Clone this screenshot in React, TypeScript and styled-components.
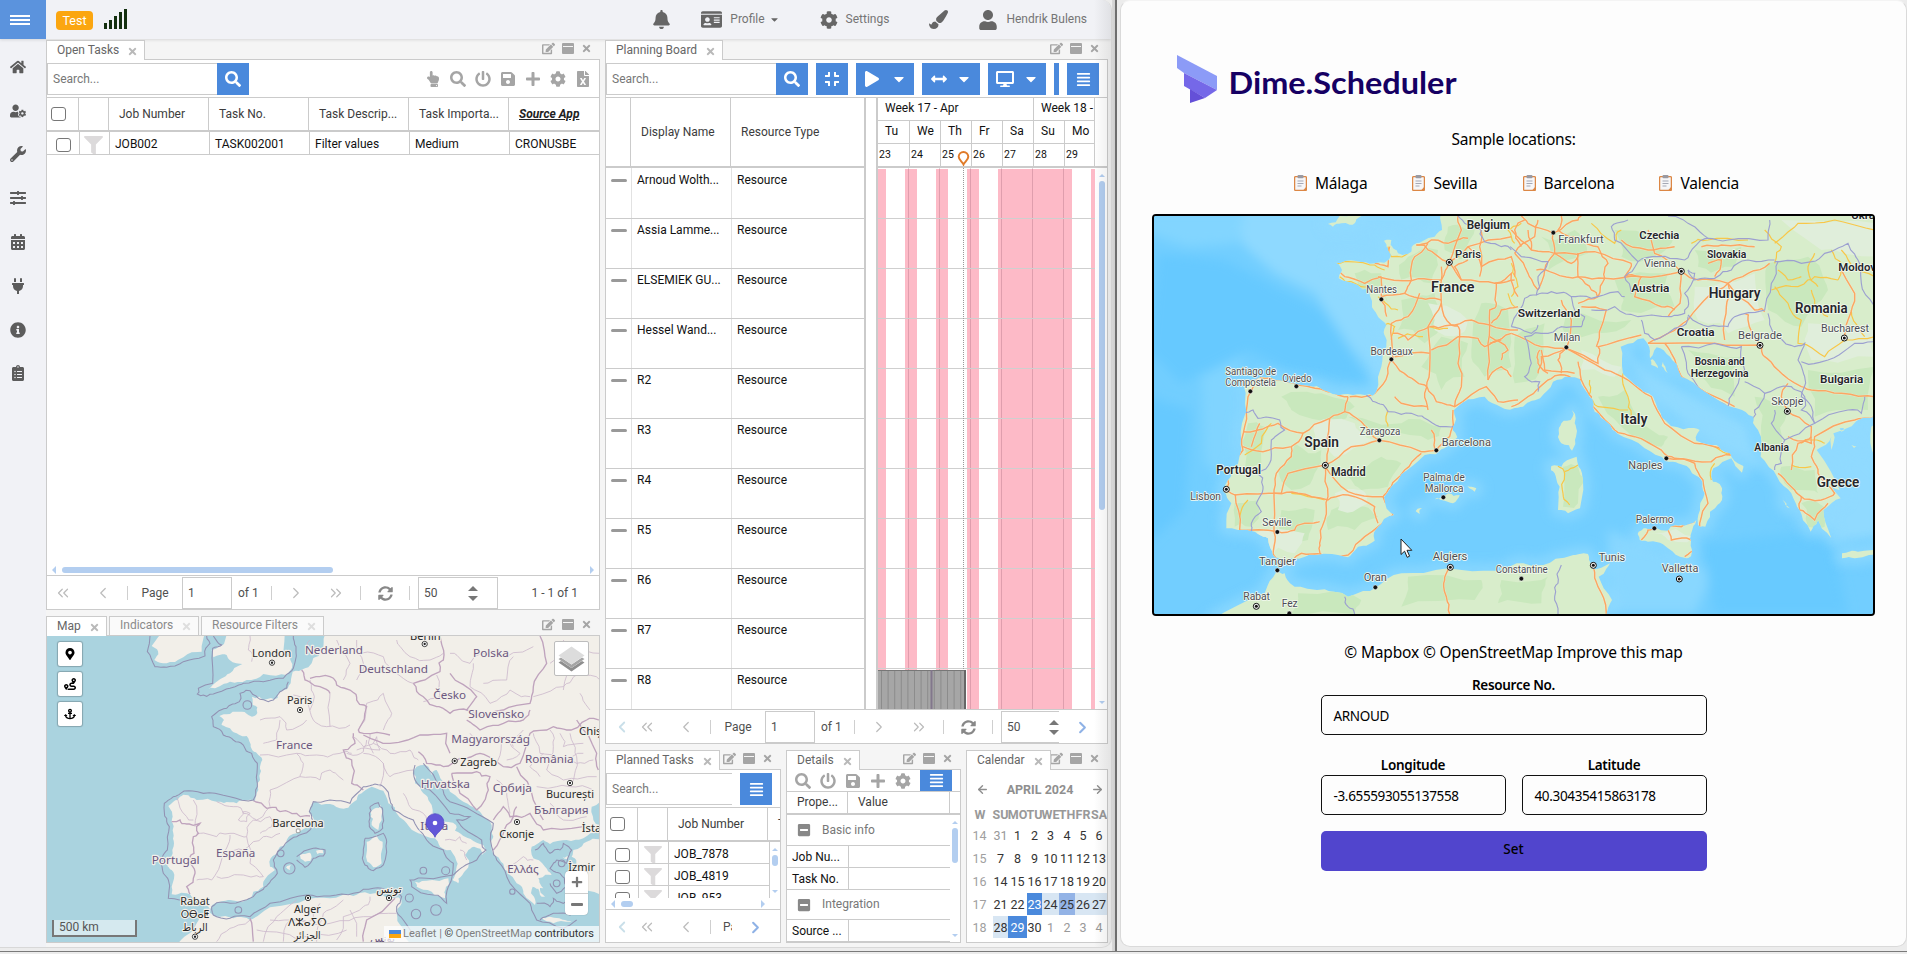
import React from "react";
import styled, { createGlobalStyle } from "styled-components";
import {
  FaHome, FaUserCog, FaWrench, FaSlidersH, FaCalendarAlt, FaPlug, FaInfoCircle, FaClipboardList,
  FaBell, FaIdCard, FaCog, FaPaintBrush, FaUser, FaSearch, FaPowerOff, FaSave, FaPlus, FaFileExcel,
  FaHandPointUp, FaEdit, FaTimes, FaCompress, FaPlay, FaCaretDown, FaArrowsAltH, FaDesktop,
  FaAlignJustify, FaSyncAlt, FaFilter, FaMinusSquare, FaMapMarkerAlt, FaRoute, FaAnchor,
} from "react-icons/fa";
import { ChevronLeft, ChevronRight, ChevronsLeft, ChevronsRight, ArrowLeft, ArrowRight } from "lucide-react";

const line = "#cbcbcb";
const blue = "#4a89dc";
const grey = "#a5a5a5";
const pale = "#b3cef0";

const GlobalStyle = createGlobalStyle`
  *, *::before, *::after { box-sizing: border-box; }
  html, body { margin: 0; height: 100%; overflow: hidden; background: #f0f0f0; }
  body { font: 12px/1.2 Roboto, "Liberation Sans", sans-serif; color: #3c3c3c; }
  svg { flex: none; }
`;

/* ---------- windows ---------- */
const Screen = styled.div`
  width: 1907px; height: 954px; display: flex; flex-direction: column; overflow: hidden;
  background: #ececec;
`;
const Windows = styled.div`
  display: flex; height: 952px; border-bottom: 1px solid #7a7a7a;
`;
const SchedulerWindow = styled.div`
  width: 1112px; height: 948px; display: flex; flex-direction: column; position: relative;
  background: #f5f5f5; border-right: 1px solid #d4d4d4; border-bottom: 1px solid #d8d8d8;
  border-radius: 0 10px 10px 0; overflow: hidden;
  &::after {
    content: ""; position: absolute; top: 0; right: 0; bottom: 0; width: 17px; pointer-events: none;
    background: linear-gradient(to right, rgba(0,0,0,0), rgba(0,0,0,.07)); z-index: 2;
  }
`;
const Divider = styled.div`
  width: 5px; margin-right: 3px; background: linear-gradient(to right, #d8d8d8, #cfcfcf);
  border-right: 2px solid #6e6e6e;
`;
const FormWindow = styled.div`
  flex: 1; height: 947px; background: #fdfdfd; border: 1px solid #dadada; border-top-color: #f4f4f4;
  border-radius: 10px; position: relative; display: flex; flex-direction: column; align-items: center;
  font-family: "Noto Sans", "Open Sans", sans-serif; color: #000;
`;

/* ---------- top bar and sidebar ---------- */
const TopBar = styled.div`
  height: 39px; flex: none; display: flex; align-items: center; background: #f1f2f6;
  box-shadow: 0 1px 3px rgba(0,0,0,.12); color: #666; padding-right: 20px; z-index: 1;
`;
const MenuButton = styled.div`
  width: 46px; height: 39px; background: #5b93dd; color: #fff; display: flex; align-items: center;
  padding-left: 10px;
`;
const MenuLines = styled.div`
  width: 20px; height: 10px; border-top: 2px solid #fff; border-bottom: 2px solid #fff; position: relative;
  &::after { content: ""; position: absolute; left: 0; right: 0; top: 2px; height: 2px; background: #fff; }
`;
const TestBadge = styled.div`
  margin-left: 10px; width: 37px; height: 19px; border-radius: 4px; background: #fba610; color: #fff;
  display: flex; align-items: center; justify-content: center; font-size: 12.5px; margin-top: 2px;
`;
const Signal = styled.div`
  display: flex; align-items: flex-end; gap: 2px; margin: -1px auto 0 11px; height: 20px;
`;
const SignalBar = styled.i<{ $h: number }>`
  width: 3px; height: ${p => p.$h}px; background: #14300f;
`;
const NavItem = styled.div<{ $gap: number }>`
  display: flex; align-items: center; margin-left: ${p => p.$gap}px; font-size: 12px;
  svg { color: #666; }
`;
const NavText = styled.span`margin: -1px 4px 0 8px; color: #757575;`;
const Body = styled.div`display: flex; flex: 1; min-height: 0;`;
const Sidebar = styled.div`
  width: 46px; flex: none; background: #f1f2f6; display: flex; flex-direction: column; padding: 6px 10px 0 0;
  color: #5c5c5c;
`;
const SideItem = styled.div`
  height: 43.8px; display: flex; align-items: center; justify-content: center; flex: none;
`;
const Content = styled.div`display: flex; gap: 5px; padding-top: 1px;`;
const Column = styled.div<{ $w: number }>`
  width: ${p => p.$w}px; display: flex; flex-direction: column; gap: 6px;
`;
const BottomPanels = styled.div`display: flex; gap: 5px;`;

/* ---------- panels ---------- */
const PanelBox = styled.div<{ $w: number; $h: number }>`
  width: ${p => p.$w}px; height: ${p => p.$h}px; display: flex; flex-direction: column; flex: none;
`;
const TabRow = styled.div`
  height: 20px; flex: none; display: flex; gap: 2px;
`;
const Tab = styled.div<{ $w: number; $active?: boolean }>`
  width: ${p => p.$w}px; border: 1px solid ${line}; border-bottom: 0; display: flex; align-items: center;
  justify-content: space-between; padding: 0 6px 1px 10px; background: ${p => (p.$active ? "#fff" : "#fafafa")};
  color: ${p => (p.$active ? "#666" : "#8a8a8a")}; position: relative; z-index: ${p => (p.$active ? 1 : 0)};
  height: ${p => (p.$active ? 20 : 19)}px; white-space: nowrap; flex: none;
  svg { color: ${p => (p.$active ? "#b9b9b9" : "#dedede")}; margin-top: 2px; }
`;
const TabTools = styled.div<{ $tight?: boolean }>`
  margin-left: auto; display: flex; gap: 7px; align-items: center; color: ${grey}; padding-right: 8px;
  height: 17px; ${p => p.$tight && "margin-left: -3px;"}
`;
const WindowGlyph = styled.i`
  width: 12px; height: 11px; background: ${grey}; border-radius: 1px; position: relative;
  &::after { content: ""; position: absolute; left: 1px; right: 1px; top: 3px; height: 1px; background: #f5f5f5; }
`;
const PanelBody = styled.div`
  flex: 1; margin-top: -1px; border: 1px solid ${line}; background: #fff; display: flex; flex-direction: column;
  min-height: 0; position: relative; overflow: hidden;
`;
const Toolbar = styled.div`
  height: 38px; flex: none; padding-top: 3px; border-bottom: 1px solid ${line}; display: flex; align-items: flex-start;
`;
const SearchInput = styled.div<{ $w: number }>`
  width: ${p => p.$w}px; height: 32px; border: 1px solid ${line}; border-right: 0; padding-left: 5px;
  display: flex; align-items: center; color: #777;
`;
const BlueButton = styled.div<{ $w: number; $ml?: number; $h?: number; $gap?: number }>`
  width: ${p => p.$w}px; height: ${p => p.$h ?? 32}px; margin-left: ${p => p.$ml ?? 0}px; background: ${blue};
  color: #fff; display: flex; align-items: center; justify-content: center; gap: ${p => p.$gap ?? 11}px; flex: none;
`;
const IconRow = styled.div<{ $gap: number; $pad: number }>`
  margin-left: auto; height: 32px; display: flex; align-items: center; gap: ${p => p.$gap}px;
  padding-right: ${p => p.$pad}px; color: ${grey};
`;
const HeaderRow = styled.div<{ $h: number }>`
  display: flex; height: ${p => p.$h}px; border-bottom: 2px solid ${line}; flex: none; white-space: nowrap;
`;
const HeaderCell = styled.div<{ $w: number; $pad?: number; $strong?: boolean; $last?: boolean }>`
  width: ${p => p.$w}px; flex: none; border-right: ${p => (p.$last ? 0 : 1)}px solid ${line}; display: flex; align-items: center;
  padding-left: ${p => p.$pad ?? 10}px; overflow: hidden;
  ${p => p.$strong && "font-weight: 700; font-style: italic; text-decoration: underline; color: #222;"}
`;
const Row = styled.div<{ $h: number }>`
  display: flex; height: ${p => p.$h}px; border-bottom: 1px solid ${line}; flex: none; white-space: nowrap; color: #111;
`;
const Cell = styled.div<{ $w: number; $pad?: number; $tone?: string; $last?: boolean; $top?: number; $drop?: number }>`
  width: ${p => p.$w}px; flex: none; border-right: ${p => (p.$last ? 0 : 1)}px solid ${p => p.$tone ?? line};
  display: flex; align-items: ${p => (p.$top === undefined ? "center" : "flex-start")};
  padding-left: ${p => p.$pad ?? 5}px; padding-top: ${p => p.$top ?? p.$drop ?? 0}px; overflow: hidden;
`;
const Check = styled.i`
  width: 15px; height: 14px; border: 1px solid #777; border-radius: 3px; background: #fff; flex: none;
`;
const Spacer = styled.div`flex: 1;`;

const ScrollRow = styled.div<{ $pr: number }>`
  height: 11px; flex: none; display: flex; align-items: center; gap: 6px; padding: 0 ${p => p.$pr}px 0 5px;
`;
const Thumb = styled.i<{ $w: number; $h: number }>`
  width: ${p => p.$w}px; height: ${p => p.$h}px; border-radius: 3px; background: ${pale};
`;
const Arrow = styled.i<{ $dir: "l" | "r" | "u" | "d"; $c?: string; $s?: number }>`
  width: 0; height: 0; border: ${p => p.$s ?? 4}px solid transparent; flex: none;
  ${p => p.$dir === "l" && `border-right-color: ${p.$c ?? pale}; border-left: 0;`}
  ${p => p.$dir === "r" && `border-left-color: ${p.$c ?? pale}; border-right: 0; margin-left: auto;`}
  ${p => p.$dir === "u" && `border-bottom-color: ${p.$c ?? pale}; border-top: 0;`}
  ${p => p.$dir === "d" && `border-top-color: ${p.$c ?? pale}; border-bottom: 0; margin-top: auto;`}
`;
const VScroll = styled.div<{ $w: number }>`
  width: ${p => p.$w}px; flex: none; display: flex; flex-direction: column; align-items: center; gap: 4px;
  padding: 6px 0 5px; background: #fff; color: ${pale};
`;

const PagerBar = styled.div`
  height: 34px; flex: none; border-top: 1px solid ${line}; display: flex; align-items: center; color: #505050;
  overflow: hidden; padding-top: 1px;
`;
const PagerCell = styled.div<{ $w: number; $pl?: number; $pr?: number; $start?: boolean; $tone?: string }>`
  width: ${p => p.$w}px; padding-left: ${p => p.$pl ?? 0}px; padding-right: ${p => p.$pr ?? 0}px; flex: none;
  display: flex; align-items: center;
  justify-content: ${p => (p.$start ? "flex-start" : "center")}; color: ${p => p.$tone ?? "inherit"};
  overflow: hidden; white-space: nowrap;
`;
const PagerSep = styled.i`width: 1px; height: 14px; background: #cfcfcf; flex: none;`;
const PagerInput = styled.div<{ $w: number; $open?: boolean; $ml?: number }>`
  width: ${p => p.$w}px; height: 32px; border: 1px solid ${line}; ${p => p.$open && "border-right: 0;"}
  margin-left: ${p => p.$ml ?? 0}px; display: flex; align-items: center; justify-content: space-between;
  padding: 0 ${p => (p.$open ? 0 : 19)}px 0 5px; flex: none;
`;
const Spinner = styled.span`
  display: flex; flex-direction: column; height: 15px; justify-content: space-between;
`;
const PagerInfo = styled.div`margin-left: auto; padding-right: 21px;`;

function Spin() {
  return <Spinner><Arrow $dir="u" $s={5} $c="#777" /><Arrow $dir="d" $s={5} $c="#777" /></Spinner>;
}

/* ---------- planning board ---------- */
const Board = styled.div`display: flex; flex: 1; min-height: 0;`;
const ResourceSide = styled.div`
  width: 260px; border-right: 2px solid ${line}; display: flex; flex-direction: column; overflow: hidden; flex: none;
`;
const Splitter = styled.div`width: 10px; flex: none;`;
const TimeSide = styled.div`
  width: 231px; border-left: 2px solid ${line}; display: flex; flex-direction: column; overflow: hidden; flex: none;
`;
const TimeHead = styled.div`
  height: 70px; border-bottom: 2px solid ${line}; display: flex; flex-direction: column; flex: none; color: #111;
  position: relative; width: 229px;
`;
const TimeLine = styled.div<{ $h: number; $last?: boolean }>`
  display: flex; height: ${p => p.$h}px; border-bottom: ${p => (p.$last ? 0 : 1)}px solid ${line}; width: 217px; flex: none;
`;
const TimeCell = styled.div<{ $w: number; $pad: number; $small?: boolean }>`
  width: ${p => p.$w}px; flex: none; border-right: 1px solid ${line}; padding: 0 0 2px ${p => p.$pad}px;
  display: flex; align-items: center; overflow: hidden; white-space: nowrap;
  ${p => p.$small && "font-size: 10.5px; padding-bottom: 0;"}
`;
const NowPin = styled.svg`position: absolute; left: 79px; top: 53px;`;
const TimeBody = styled.div`display: flex; flex: 1; min-height: 0;`;
const Dash = styled.i`width: 16px; height: 3px; border-radius: 2px; background: #999; margin-top: 6px;`;

/* ---------- calendar ---------- */
const CalTitle = styled.div`
  display: flex; justify-content: space-between; align-items: center; padding: 0 3px 2px 9px; height: 40px;
  font-weight: 700; color: #8f8f8f; font-size: 12.5px; flex: none;
`;
const CalGrid = styled.div`
  display: grid; grid-template-columns: 26px 15px 19px 15px 17px 16px 16px 16px; grid-template-rows: 20px;
  grid-auto-rows: 23px; margin-top: -6px;
`;
const Day = styled.div<{ $k: string }>`
  display: flex; align-items: center; justify-content: center; font-size: 12.5px; color: #333;
  ${p => p.$k === "h" && "font-weight: 700; color: #999;"}
  ${p => p.$k === "w" && "color: #a0a0a0; padding-right: 1px;"}
  ${p => p.$k === "o" && "color: #999;"}
  ${p => p.$k === "s" && `background: ${blue}; color: #fff; height: 22px;`}
  ${p => p.$k === "r" && "background: #d8e6f3; height: 22px;"}
  ${p => p.$k === "t" && "background: #93b3e6; height: 22px;"}
`;

/* ---------- map overlays ---------- */
const MapFrame = styled.div`position: relative; flex: 1; overflow: hidden; background: #aad3df;`;
const MapSvg = styled.svg`display: block;`;
const MapButtons = styled.div`
  position: absolute; left: 11px; top: 6px; display: flex; flex-direction: column; gap: 6px;
`;
const MapButton = styled.div`
  width: 24px; height: 24px; background: #fff; border-radius: 2px; display: flex; align-items: center;
  justify-content: center; color: #000; box-shadow: 0 0 1px 1px rgba(0,0,0,.22);
`;
const LayersButton = styled.div`
  position: absolute; right: 10px; top: 5px; width: 35px; height: 35px; background: #fff; border: 1px solid #bdbdbd;
  border-radius: 2px; display: flex; align-items: center; justify-content: center;
`;
const ZoomControl = styled.div`
  position: absolute; right: 11px; top: 235px; width: 23px; height: 44px; background: #fff; border-radius: 4px;
  display: flex; flex-direction: column; box-shadow: 0 0 1px rgba(0,0,0,.4);
`;
const ZoomHalf = styled.div`
  flex: 1; display: flex; align-items: center; justify-content: center; position: relative;
  &:first-child { border-bottom: 1px solid #ccc; }
`;
const ScaleBar = styled.div`
  position: absolute; left: 5px; bottom: 5px; width: 85px; height: 17px; border: 2px solid #777; border-top: 0;
  background: rgba(255,255,255,.5); padding-left: 5px; color: #555; line-height: 14px;
`;
const Attribution = styled.div`
  position: absolute; right: 0; bottom: 0; height: 16px; display: flex; align-items: center; gap: 2.5px;
  background: rgba(255,255,255,.7); padding: 0 5px; color: #333; font-size: 11px; white-space: nowrap;
`;
const Muted = styled.span`color: #808080;`;
const Flag = styled.i`width: 12px; height: 8px; background: linear-gradient(#4a89dc 50%, #fba610 50%);`;

/* ---------- right form ---------- */
const LogoRow = styled.div`width: 100%; padding: 51px 0 0 56px; height: 124px; flex: none;`;
const SampleTitle = styled.div`font-size: 15.5px; line-height: 24px; margin-top: 2px; height: 44px; letter-spacing: -.2px;`;
const Places = styled.div`
  display: flex; height: 43px; font-size: 15.5px; line-height: 24px; gap: 45px; letter-spacing: -.2px; padding-left: 6px;
`;
const Place = styled.div`display: flex; gap: 8px; height: 24px; align-items: center;`;
const MapboxFrame = styled.div`
  width: 723px; height: 402px; border: 2px solid #000; border-radius: 4px; overflow: hidden; position: relative; flex: none;
  background: #75cff0;
`;
const Cursor = styled.svg`position: absolute; left: 246px; top: 322px;`;
const Credits = styled.div`margin-top: 24px; font-size: 15.5px; line-height: 24px; letter-spacing: -.16px;`;
const Form = styled.div`width: 386px; display: flex; flex-direction: column; margin-top: 11px;`;
const Label = styled.div`
  text-align: center; font-size: 13.5px; line-height: 20px; font-weight: 600; letter-spacing: -.3px;
`;
const Input = styled.div`
  height: 40px; border: 1px solid #111; border-radius: 5px; padding: 2px 0 0 12px; display: flex; align-items: center;
  font-size: 13.5px; letter-spacing: -.35px;
`;
const Pair = styled.div`display: flex; gap: 16px; margin: 20px 0 16px;`;
const Field = styled.div`flex: 1;`;
const SetButton = styled.div`
  height: 40px; border-radius: 5px; background: #5145cd; color: #000; font-weight: 500; font-size: 13.5px;
  display: flex; align-items: center; justify-content: center; padding-bottom: 3px;
`;

/* ---------- geometry helpers ---------- */
const noise = (n: number) => {
  const s = Math.sin(n * 12.9898) * 43758.5453;
  return s - Math.floor(s) - 0.5;
};

function trace(src: string, amp = 7, close = false): string {
  const v = src.trim().split(/[\s,]+/).map(Number);
  let pts: number[][] = [];
  for (let i = 0; i < v.length; i += 2) pts.push([v[i], v[i + 1]]);
  if (close) pts.push(pts[0]);
  for (let k = 0; k < 2; k++) {
    const out: number[][] = [pts[0]];
    for (let i = 1; i < pts.length; i++) {
      const [ax, ay] = pts[i - 1];
      const [bx, by] = pts[i];
      const d = Math.hypot(bx - ax, by - ay);
      if (d > 12) {
        const a = Math.min(amp, d / 4) / (k + 1);
        out.push([(ax + bx) / 2 + noise(ax + by * 3) * a * 2, (ay + by) / 2 + noise(ay * 2 + bx) * a * 2]);
      }
      out.push([bx, by]);
    }
    pts = out;
  }
  return "M" + pts.map(p => p[0].toFixed(0) + " " + p[1].toFixed(0)).join("L") + (close ? "Z" : "");
}

const osmLand = [
  "893,30 880,80 866,108 845,130 825,145 788,155 782,190 770,208 745,220 732,238 700,240 688,230 666,230 668,255 682,262 678,285 655,285 630,275 600,282 568,288 582,300 575,315 600,325 620,340 650,348 662,380 672,395 685,405 697,420 690,440 690,480 685,510 675,543 640,540 600,547 560,545 500,540 475,526 450,530 430,545 415,558 428,590 425,605 430,640 432,670 428,700 412,738 425,750 428,790 425,823 470,820 490,838 515,850 540,868 560,848 600,840 650,840 670,815 700,800 707,775 735,750 720,740 722,715 750,680 770,660 800,640 840,618 852,600 838,580 842,560 860,545 900,552 930,565 955,563 980,540 1000,515 1025,500 1060,512 1075,550 1100,580 1130,610 1165,640 1215,655 1230,680 1262,690 1275,710 1280,740 1268,780 1285,790 1297,765 1315,742 1318,722 1305,705 1315,690 1332,680 1357,705 1368,690 1340,668 1305,650 1275,632 1278,615 1240,602 1208,580 1195,540 1180,520 1155,490 1148,460 1160,440 1180,435 1195,440 1205,465 1220,450 1235,480 1260,515 1300,545 1350,575 1380,605 1390,650 1385,690 1410,720 1425,750 1440,765 1460,790 1480,820 1515,855 1512,830 1508,800 1540,805 1525,775 1565,765 1545,740 1510,715 1505,680 1540,660 1560,672 1610,660 1660,655 1700,635 1720,620 1690,600 1685,560 1720,540 1720,30",
  "590,30 582,72 545,90 550,112 590,105 608,127 637,132 600,160 560,185 535,208 555,205 600,185 650,180 700,162 770,165 782,150 778,110 760,100 770,30",
  "400,30 365,78 385,103 373,120 410,130 460,112 515,95 527,30",
  "440,975 490,930 510,890 530,870 560,890 610,895 660,900 720,862 830,838 900,835 970,828 1020,822 1060,828 1105,832 1115,850 1100,880 1115,920 1145,975",
  "1035,565 1052,555 1055,600 1045,630 1025,615 1022,590",
  "1010,665 1040,645 1058,665 1055,730 1030,742 1012,725",
  "1155,785 1190,782 1255,775 1248,800 1245,835 1205,815 1160,800",
  "810,705 840,698 845,712 825,725", "858,692 878,690 880,700 862,702", "768,742 782,735 780,750",
  "1535,892 1560,890 1605,900 1625,905 1570,910",
  "1720,660 1670,665 1630,690 1625,710 1640,740 1640,790 1660,810 1720,830",
  "1505,780 1530,800 1545,830 1530,825",
  "1598,712 1612,708 1614,720", "1625,762 1640,760 1636,772",
];
const osmCoastLines = [
  "360,48 352,95 375,140 410,142 460,125 525,108 540,70 530,48",
  "550,48 575,75 548,85 548,190 505,205 502,222 520,225 550,222 600,205 640,190 700,185 760,175 790,145 798,80 790,48",
  "775,185 770,205 750,215 730,240 690,238 660,212 630,220 628,245 590,265 545,290 550,320 580,345 610,360 640,375 665,400 682,430 682,490 670,540 600,530 520,520 462,513 430,530 403,550 410,595 418,620 412,690 395,725 400,760 415,780 415,835 470,838 520,855",
  "545,860 560,848 600,850 670,830 700,808 712,795 742,760 730,720 760,680 800,650 840,630 850,605 838,575 850,545 900,540 960,550 1000,500 1035,492 1060,500 1080,540 1090,570 1150,600 1190,660 1240,690 1270,730 1255,800 1250,850 1210,825 1145,800 1140,780 1190,775 1270,765 1300,740 1340,720 1368,690 1355,660 1300,625 1280,600 1320,590 1260,580 1200,510 1155,480 1155,435",
  "1180,430 1230,500 1260,545 1330,575 1390,610 1385,680 1400,720 1440,790 1500,850 1520,900 1600,925 1640,900",
  "545,860 550,885 600,895 660,890 720,850 830,825 900,828 970,820 1030,805 1080,815 1115,830 1100,860 1120,900 1150,950",
  "1020,560 1045,548 1058,570 1058,625 1035,640 1018,620 1018,580 1020,560",
  "1005,655 1060,640 1070,665 1060,735 1030,752 1005,735 1000,700 1005,655",
  "800,710 850,685 885,690 880,708 850,715 825,742 800,720",
  "1515,690 1540,670 1560,700 1590,690 1600,670 1625,690 1610,730 1580,720 1560,745 1590,760 1610,800 1580,820 1560,790",
  "1520,850 1560,860 1570,835 1600,850 1640,840 1650,870 1620,885 1570,880 1530,900",
];
const osmBorders = [
  "425,605 450,600 470,612 510,610 505,640 490,650 492,700 480,720 495,760 470,800 480,822",
  "670,542 710,565 750,575 800,580 840,588", "815,150 825,180 870,200 900,220",
  "840,175 900,170 920,195 960,210 980,240 1010,260 985,330 1000,340 1080,345",
  "970,340 975,370 940,390 965,420 965,490 1000,510", "1000,345 1080,370 1170,345 1250,340 1260,400",
  "1150,190 1230,155 1240,120 1230,48", "1150,190 1180,230 1220,260 1260,280 1310,270 1340,230 1260,160",
  "1310,270 1350,290 1420,270 1500,250 1510,200 1550,130 1530,48", "1310,300 1350,330 1420,310 1480,300 1500,270",
  "1165,395 1190,430 1240,440 1290,415 1350,400 1420,440 1470,430 1500,340 1570,320 1610,330 1670,300 1710,300",
  "1265,460 1340,455 1380,470 1375,510 1340,570 1290,520 1265,460", "1390,600 1420,560 1440,590 1500,580 1540,630 1660,620",
  "1460,560 1450,590 1420,640 1390,690", "1460,440 1510,540 1540,600", "1640,300 1700,400 1705,450",
  "660,895 670,965", "1095,835 1010,900 1000,965",
];
const osmRegions = [
  "490,540 495,620", "560,545 610,560 640,580 680,600 720,560", "500,640 560,650 600,640 650,650 670,600 720,590",
  "600,645 580,700 545,780 500,780", "580,700 640,690 700,650 750,640", "560,770 640,765 700,770", "650,650 660,730 700,770",
  "690,300 750,290 770,330 830,300", "700,370 740,360 750,300", "790,225 830,240 850,300 890,320 960,315",
  "840,180 850,220 840,270", "690,405 800,400 820,430 810,470", "720,560 720,510 810,470 870,480 900,450 940,480",
  "800,400 860,405 930,400 965,400", "900,220 900,320", "990,320 1010,250 1060,220 1085,280 1060,330",
  "990,100 1060,110 1100,160 1150,190", "920,60 960,130 940,180", "1100,60 1140,110 1200,120 1240,100",
  "1260,100 1320,130 1360,100 1430,110 1510,80", "1330,130 1320,200 1380,250 1440,210 1500,230", "1360,190 1430,180 1450,110",
  "1510,230 1600,200 1650,160 1710,180", "1560,130 1640,90 1710,100", "1600,60 1620,130 1600,210", "1650,220 1680,270",
  "1180,245 1240,225 1300,235", "1220,165 1230,230", "1320,340 1370,370 1410,350 1450,380", "1410,350 1400,430",
  "1510,340 1530,400 1590,420 1660,400", "1560,330 1570,380 1550,450 1600,480 1700,470", "1620,340 1640,410 1620,500",
  "1520,500 1620,500 1690,510", "1560,550 1600,600 1670,590", "1000,400 1060,430 1080,470 1150,450", "1060,430 1050,500",
  "1120,520 1140,560 1180,580 1200,620", "1245,660 1290,650 1310,670", "1290,690 1310,720",
  "1030,370 1080,400 1140,390 1165,420", "440,530 470,590 490,600", "1430,740 1480,710 1510,720", "1400,480 1430,520 1440,580",
  "560,965 600,925 660,900", "700,965 740,890 800,840", "760,965 780,900 850,900 870,850", "860,965 880,880 940,840",
  "920,960 940,890 1000,860 1020,830", "980,950 960,870", "720,900 800,900 900,910 1000,890 1100,880", "680,930 760,940 850,950 950,930",
  "970,350 1000,380 1040,350 1050,390 980,390", "1020,340 1030,400", "950,400 1000,395 1010,360", "980,180 1000,130 980,60",
  "1480,330 1440,370 1470,400 1430,420", "1580,420 1640,430 1690,420", "1590,340 1600,380 1660,370", "1540,400 1500,440 1530,470",
  "640,575 660,580 650,605 625,600 640,575", "720,590 725,620 690,640", "830,100 840,60", "660,48 655,90 665,125",
];
type OsmLabel = [number, number, string, number, number, boolean?];
const osmLabels: OsmLabel[] = [
  [725, 111, "London", 118, 34], [809, 252, "Paris", 76, 34], [804, 621, "Barcelona", 154, 34], [793, 386, "France", 110, 34, true],
  [617, 711, "España", 118, 34, true], [437, 733, "Portugal", 144, 34, true], [912, 101, "Nederland", 174, 34, true],
  [1090, 159, "Deutschland", 208, 34, true], [1186, 59, "Berlin", 92, 34], [1383, 112, "Polska", 108, 34, true],
  [1259, 236, "Česko", 98, 34, true], [1399, 293, "Slovensko", 168, 34, true], [1382, 369, "Magyarország", 236, 34, true],
  [1346, 437, "Zagreb", 110, 34], [1246, 504, "Hrvatska", 148, 34, true], [1558, 429, "România", 146, 34, true],
  [1447, 517, "Србија", 118, 34, true], [1620, 533, "București", 144, 34], [1594, 583, "България", 164, 34, true],
  [1460, 653, "Скопје", 104, 34], [1479, 758, "Ελλάς", 94, 34, true], [1655, 753, "İzmir", 80, 34],
  [1213, 629, "Italia", 84, 34, true], [495, 854, "Rabat", 88, 34], [832, 879, "Alger", 80, 34], [1077, 818, "تونس", 76, 32],
  [495, 893, "ⵔⴱⴰⵟ", 86, 32], [495, 932, "الرباط", 76, 32], [832, 918, "ⴷⵣⴰⵢⵔ", 116, 32], [832, 957, "الجزائر", 80, 32],
];
const osmDots = ["726 128", "810 270", "1184 72", "1274 423", "1620 489", "1461 606", "834 834", "1077 834", "495 950"];
const osmRings = [
  "752 700 10", "625 870 10", "778 745 17", "652 255 13", "1180 752 10", "1247 752 12", "1138 834 12",
  "1158 882 14", "1218 870 16", "1447 815 8", "1595 730 10", "1580 790 10",
];

function OsmMap() {
  return (
    <MapSvg width="552" height="306" viewBox="51 48 1656 918" fontFamily='"Noto Sans", "DejaVu Sans", sans-serif'>
      <g fill="#f2efe9">{osmLand.map((d, i) => <path key={i} d={trace(d, 7, true)} />)}</g>
      <g fill="none" stroke="#cdb9cc" strokeWidth="2.5">{osmRegions.map((d, i) => <path key={i} d={trace(d, 10)} />)}</g>
      <g fill="none" stroke="#bfa3bd" strokeWidth="4">{osmBorders.map((d, i) => <path key={i} d={trace(d, 9)} />)}</g>
      <g fill="none" stroke="#9292b3" strokeWidth="3.2">
        {osmCoastLines.map((d, i) => <path key={i} d={trace(d, 6)} />)}
        {osmRings.map(c => {
          const [x, y, r] = c.split(" ");
          return <circle key={c} cx={x} cy={y} r={r} />;
        })}
      </g>
      <g stroke="#f2efe9" strokeWidth="7" strokeLinejoin="round" paintOrder="stroke" textAnchor="middle">
        {osmLabels.map(([x, y, t, w, s, c]) => (
          <text key={t} x={x} y={y} fontSize={s} textLength={w} lengthAdjust="spacingAndGlyphs" fill={c ? "#6b5780" : "#2b2b2b"}>{t}</text>
        ))}
        <text x="1647" y="345" fontSize="34" textAnchor="start" fill="#2b2b2b">Chișinău</text>
        <text x="1655" y="637" fontSize="34" textAnchor="start" fill="#2b2b2b">İstanbul</text>
        <text x="1020" y="965" fontSize="32" textAnchor="start" fill="#6b5780">تونس</text>
      </g>
      {osmDots.map(c => {
        const [x, y] = c.split(" ");
        return <g key={c}><circle cx={x} cy={y} r="8" fill="#fff" stroke="#222" strokeWidth="2.5" /><circle cx={x} cy={y} r="3.5" fill="#222" /></g>;
      })}
      <rect x="799" y="627" width="11" height="11" rx="2" fill="#fff" stroke="#777" strokeWidth="2" />
      <path d="M1215 652c-4-15-27-22-27-44a27 27 0 1 1 54 0c0 22-23 29-27 44z" fill="#6357d8" stroke="#4c42c0" strokeWidth="2" />
      <circle cx="1215" cy="609" r="7" fill="#fff" />
    </MapSvg>
  );
}

const mbLand = [
  "882,0 882,60 860,80 805,100 790,125 750,130 735,115 730,90 708,92 720,115 722,150 680,160 620,152 560,158 582,180 572,205 630,225 660,240 672,292 700,330 715,345 712,380 715,410 700,470 685,545 650,555 600,552 540,545 480,527 400,512 340,500 290,518 292,560 282,640 280,720 248,800 226,845 250,880 235,955 320,965 360,985 375,1035 400,1062 430,1045 500,1035 600,1042 630,1010 680,992 690,950 738,915 708,862 760,792 830,735 880,718 928,682 915,650 918,600 960,568 1010,560 1060,592 1100,594 1125,590 1176,565 1215,515 1251,500 1296,508 1325,560 1340,605 1376,635 1410,672 1490,715 1540,740 1575,755 1616,768 1632,790 1660,810 1670,850 1656,900 1650,945 1672,950 1686,905 1722,870 1722,835 1695,815 1696,775 1750,745 1782,788 1786,768 1745,730 1706,705 1645,692 1655,660 1606,658 1541,622 1515,560 1470,530 1425,492 1418,410 1486,385 1498,400 1506,445 1526,412 1566,440 1600,500 1676,548 1766,595 1816,620 1830,660 1838,740 1886,798 1930,850 1955,900 1988,965 2010,930 2050,985 2026,900 2078,865 2040,810 2075,840 2006,720 2050,680 2050,720 2056,670 2126,632 2200,625 2200,0",
  "190,1230 350,1150 385,1085 410,1090 440,1130 530,1138 600,1160 680,1135 760,1090 900,1075 1040,1082 1106,1060 1186,1065 1276,1035 1320,1032 1336,1078 1386,1060 1352,1100 1392,1170 1375,1230",
  "1272,600 1280,640 1284,680 1272,722 1240,700 1232,660 1240,640 1268,630", "1210,768 1240,770 1286,740 1302,790 1296,895 1260,910 1230,900 1235,830 1220,790",
  "1472,965 1500,958 1560,962 1600,945 1645,930 1628,975 1632,1020 1615,1045 1560,1015 1500,995 1475,990",
  "860,868 900,850 935,855 915,880 890,872", "958,828 985,835 980,845", "803,903 822,895 815,912",
  "2082,1030 2130,1025 2200,1012 2200,1035 2120,1045 2082,1045", "540,42 575,18 640,18 620,40 580,40 555,50",
  "2170,650 2200,640 2200,760 2180,740", "1904,870 1915,880 1925,895 1912,885",
  "1508,450 1514,448 1530,475 1524,470", "1545,455 1552,470 1560,490 1550,480", "2075,655 2090,660 2080,665", "2110,705 2125,708 2118,714",
];
const mbGreen = [
  "760,270 860,250 900,330 830,400 750,360", "880,380 960,400 950,500 880,540 820,470", "1000,280 1080,300 1090,470 1010,500 970,420",
  "400,560 520,550 620,590 560,630 430,600", "300,640 350,650 340,760 290,780", "440,700 520,720 500,790 430,840 390,780",
  "600,620 760,640 880,650 840,690 720,660", "700,740 760,760 720,830 640,840 600,800", "550,900 650,890 690,920 620,960 540,960",
  "400,900 500,900 480,990 400,1000", "260,880 330,870 310,950 260,950", "1100,380 1190,340 1180,460 1100,520",
  "1260,300 1450,330 1340,370 1260,380", "1180,80 1280,60 1320,130 1200,180", "1400,60 1580,70 1540,130 1420,140",
  "1400,210 1560,190 1580,290 1420,300", "1640,120 1780,110 1760,170 1650,170", "1860,160 1980,140 2040,240 1960,350 1860,300",
  "1620,420 1780,440 1760,560 1660,500", "1820,560 1920,600 1900,720 1840,690", "1980,480 2180,470 2160,600 2000,620",
  "1900,770 2000,780 2010,850 1930,840", "1960,880 2030,890 2030,950 1980,950", "1350,560 1430,540 1480,640 1560,680 1540,710 1420,650",
  "1245,770 1290,770 1290,880 1245,890", "450,1150 640,1170 620,1212 430,1212", "780,1100 1000,1110 980,1170 760,1190", "1060,1110 1200,1100 1180,1180 1050,1180",
  "900,50 980,60 960,140 890,120", "780,140 870,120 850,220 760,210", "620,190 700,190 720,280 660,250",
];
const mbPaleLand = [
  "840,280 960,330 940,370 860,360", "500,640 620,640 680,690 560,740 500,700", "560,850 640,840 660,880 570,900",
  "1300,420 1420,470 1400,500 1300,480", "1640,230 1820,190 1850,330 1740,370 1650,330", "1980,340 2180,360 2180,440 1990,450",
  "300,980 470,970 440,1030 370,1030", "1900,30 2180,40 2180,140 2020,120", "1640,980 1560,990 1500,970",
];
const mbRoads = [
  "904,157 880,210 790,212 690,200", "904,157 840,120 805,105", "904,157 960,110 1090,80", "904,157 940,60 930,18", "904,157 940,210 1040,220 1100,210",
  "880,170 880,280 910,345 935,360 930,460 940,530 920,590", "700,260 770,250 790,210 800,140 840,100", "700,200 700,260 716,320", "770,250 820,265 880,270",
  "880,280 840,350 845,480 830,550 840,600", "845,350 910,345 970,330 1025,345 1110,360", "735,445 730,340 780,320 815,250",
  "730,450 720,490 680,550 605,560", "730,450 780,500 830,525 865,575 920,590 1015,530 1050,575 1110,570", "740,440 845,430", "600,560 540,545 450,525 400,510 330,500 300,560 290,650 285,720 240,800 235,840 262,855 275,960 390,965",
  "600,560 590,605 545,625 465,670 430,710 345,725 285,710", "545,625 540,700 532,765 540,860 530,930 515,1000 525,1040 600,1035 650,980 735,915 705,860 600,845 532,770",
  "532,765 420,790 400,850 260,855", "532,765 610,710 693,691 820,725 865,720 905,680 915,600", "590,605 640,635 670,670 693,691", "860,715 850,660",
  "820,730 770,780 730,830 705,860", "430,710 430,740 385,790 378,860 378,965 375,1030 390,1075", "378,850 450,850 540,870 600,855 680,890 690,940", "390,965 440,960 470,940 515,935", "400,1060 460,1030 525,1035",
  "285,665 330,660 390,640 465,670", "335,640 310,710", "805,105 850,90 900,100 960,85", "1000,30 995,110 995,200", "1045,220 1045,280 1025,300 1020,400 1020,510", "1025,380 1080,420 1060,450",
  "740,560 760,580 840,590", "560,160 590,200 650,220 700,200", "680,160 720,170 725,110", "930,380 990,385 1010,410 1060,390", "850,420 930,380",
  "1090,590 1140,560 1200,510 1250,495 1300,510 1330,560 1345,600 1400,660 1460,680 1540,720 1580,745 1690,755 1750,735 1700,710 1640,700 1550,640 1510,560 1440,510 1370,480 1255,415 1180,410 1090,370",
  "1255,415 1180,440 1170,490", "1255,415 1270,330 1240,270", "1180,420 1190,480 1280,490", "1255,415 1330,450 1350,460 1350,410 1480,375", "1290,455 1300,510", "1345,410 1360,350 1375,300 1300,290",
  "1215,70 1220,130 1190,180 1170,240", "1215,70 1290,30 1300,18", "1215,70 1140,40 1120,18", "1220,130 1340,125 1450,160", "1290,130 1290,200 1370,205 1480,200 1600,185", "1090,60 1150,120 1220,130",
  "1350,110 1380,160 1370,205 1350,260 1290,280", "1600,185 1596,280 1560,320", "1600,185 1650,210 1740,220 1735,290 1730,390", "1740,220 1800,190 1865,160", "1740,220 1820,300 1850,305",
  "1620,330 1680,260 1740,220", "1480,200 1460,260 1540,290 1580,300", "1500,60 1520,130 1600,185", "1420,90 1500,120 1580,110", "1500,400 1560,370 1620,330", "1500,400 1700,400 1836,405 1850,440 1890,480 1960,530 1990,540 2080,550 2180,560",
  "1550,400 1570,430 1600,500 1760,590", "1836,405 1800,330 1790,310", "1918,604 1900,560 1920,520", "1918,604 1990,650 1990,700 1920,680", "2180,620 2120,630 2000,680 1990,740 2010,790 2060,850 2020,870 1960,860 1930,830 1890,790",
  "1960,860 1955,900 2000,930 2040,880", "1930,780 1950,700 1990,680", "1555,745 1640,760 1665,810 1680,880 1655,940 1640,1020 1610,1040", "1540,955 1600,950 1640,935", "1560,960 1570,990 1630,990", "1480,990 1500,960 1520,955",
  "907,1072 890,1110 895,1160 905,1212", "1336,1070 1350,1130 1375,1212", "1170,30 1160,80 1100,130", "1660,110 1720,105 1820,110", "1680,160 1720,150 1700,200", "2080,180 2120,250 2100,330 2090,385",
  "960,110 1000,170 1090,140 1100,200", "1040,220 1090,190 1110,260", "1100,130 1140,190 1170,240", "1165,180 1220,190 1290,200", "1290,200 1330,240 1350,260", "1220,130 1270,160 1290,130",
  "1130,30 1100,60 1120,110", "1240,18 1230,60 1300,90 1350,110", "1150,120 1140,60", "1175,420 1170,460 1200,490", "1255,415 1230,450 1240,490", "1450,160 1430,200 1480,200",
  "1030,340 1060,300 1110,290", "1025,400 1090,370", "1020,510 1060,470 1090,500", "940,210 920,170 960,150", "735,370 780,390 845,350",
];
const mbYellow = [
  "560,160 600,155 680,165 710,180", "720,110 730,140 780,130", "575,200 620,220 670,230", "710,345 740,350 730,390", "750,385 800,375 825,380", "845,350 900,355", "690,260 720,285 750,300",
  "370,640 340,700 290,735", "430,850 530,870", "300,870 275,920", "720,600 720,650", "1230,768 1250,790 1245,850 1265,885", "1250,785 1290,765", "1325,510 1320,560 1350,590 1440,600",
  "1425,490 1440,560 1450,620", "1700,760 1690,810", "1700,710 1760,735", "1880,100 1950,40 2060,30 2180,60", "1880,160 1900,110 1850,60", "1870,240 1950,230 2000,200 2070,210", "1960,330 1950,400 2030,440 2090,390 2180,380",
  "1990,240 2000,290 2040,320", "2080,120 2120,180 2180,200", "1880,230 1920,280 1960,330", "1960,700 2000,690 2030,700", "1930,765 1990,770", "1090,160 1110,230 1090,260", "1080,250 1100,290", "1630,100 1680,90 1800,90", "1330,40 1400,100 1420,60",
  "1890,180 1920,210 1960,200", "2070,210 2080,160 2050,120", "2000,130 1980,180 2010,230", "2110,300 2130,350 2150,380", "1100,100 1080,60 1120,40",
];
const mbBorders = [
  "285,610 315,600 330,625 395,630 410,660 370,690 365,760 325,790 345,830 325,880 340,905 310,940 310,965", "655,555 690,580 720,605 790,610 840,630 880,650 925,645",
  "930,18 950,40 1000,60 1010,95 1060,110 1090,120", "1086,110 1120,140 1200,155 1170,200 1165,255 1130,265 1090,350", "1165,255 1210,245 1270,260 1330,265 1410,245 1430,260",
  "1270,260 1280,300 1310,320 1300,350 1240,350 1200,370 1130,380 1150,460 1130,500 1175,515 1170,545", "1330,300 1400,290 1470,320 1570,320 1610,310 1620,290 1610,250 1640,190 1620,180",
  "1440,30 1390,50 1400,90 1470,155 1430,200 1450,250", "1470,155 1530,140 1610,150 1640,110 1680,85 1620,40 1560,18", "1680,85 1740,90 1860,90 1865,30", "1620,180 1640,210 1700,205 1750,180 1800,150 1880,150",
  "1890,155 1870,220 1850,300 1760,320 1740,350 1680,350 1620,315", "1880,155 1960,160 2030,130 2100,100 2130,150 2140,220 2180,290", "1860,310 1880,380 1940,410 1970,400 1950,450 1970,500 1960,560 1990,590 2000,640",
  "1960,455 2040,450 2120,400 2180,395", "1600,410 1700,400 1780,410 1790,480 1760,540 1740,590 1680,560 1620,490 1600,410", "1480,330 1490,370 1520,390 1600,350 1620,320", "1790,515 1850,550 1820,600 1810,640",
  "1850,550 1930,530 1970,560 1960,600 2000,640 1910,690 1870,640 1880,600", "1910,690 1900,760 1880,780", "2000,640 2100,600 2140,610 2150,560", "590,1160 600,1190 620,1212", "1240,1065 1230,1120 1220,1160 1230,1212",
  "1090,350 1150,370 1170,345",
];
type MbLabel = [number, number, string, number, number, number];
const mbLabels: MbLabel[] = [
  [1021, 58, "Belgium", 130, 36, 600], [960, 146, "Paris", 78, 35, 500], [914, 249, "France", 130, 42, 600], [701, 252, "Nantes", 92, 31, 400],
  [731, 436, "Bordeaux", 127, 31, 400], [308, 497, "Santiago de", 152, 31, 400], [308, 530, "Compostela", 152, 31, 400], [447, 517, "Oviedo", 88, 31, 400],
  [521, 712, "Spain", 104, 42, 600], [696, 676, "Zaragoza", 122, 31, 400], [955, 711, "Barcelona", 148, 33, 400], [601, 800, "Madrid", 104, 36, 600],
  [272, 793, "Portugal", 134, 36, 600], [173, 872, "Lisbon", 92, 33, 400], [888, 814, "Palma de", 124, 31, 400], [888, 847, "Mallorca", 116, 31, 400],
  [387, 951, "Seville", 88, 31, 400], [388, 1066, "Tangier", 110, 33, 400], [906, 1053, "Algiers", 104, 33, 400], [682, 1116, "Oran", 70, 33, 400],
  [326, 1172, "Rabat", 80, 33, 400], [425, 1194, "Fez", 48, 33, 400], [1121, 1091, "Constantine", 156, 30, 400], [1299, 101, "Frankfurt", 136, 32, 400],
  [1534, 90, "Czechia", 120, 34, 600], [1736, 145, "Slovakia", 118, 33, 600], [1536, 173, "Vienna", 96, 33, 400], [1507, 249, "Austria", 114, 34, 600],
  [1760, 266, "Hungary", 156, 42, 600], [2020, 310, "Romania", 158, 42, 600], [1203, 324, "Switzerland", 188, 34, 600], [1257, 395, "Milan", 80, 33, 400],
  [1643, 381, "Croatia", 114, 34, 600], [1836, 390, "Belgrade", 132, 33, 400], [2091, 367, "Bucharest", 144, 33, 400], [1715, 467, "Bosnia and", 150, 32, 600],
  [1715, 503, "Herzegovina", 174, 32, 600], [2081, 521, "Bulgaria", 130, 34, 600], [1918, 586, "Skopje", 96, 33, 400], [1458, 643, "Italy", 82, 42, 600],
  [1871, 725, "Albania", 104, 32, 600], [1492, 780, "Naples", 102, 33, 400], [2070, 832, "Greece", 128, 42, 600], [1520, 941, "Palermo", 114, 33, 400],
  [1392, 1054, "Tunis", 80, 33, 400], [1596, 1089, "Valletta", 110, 33, 400],
];
const mbCapitals = ["904 157", "532 766", "235 838", "907 1072", "325 1189", "1600 184", "1836 406", "2089 384", "1918 604", "1336 1066", "1594 1107"];
const mbCities = ["700 268", "730 448", "307 544", "445 529", "694 691", "865 721", "886 862", "388 966", "388 1081", "682 1132", "424 1210", "1120 1106", "1216 68", "1255 412", "1555 745", "1519 955"];

function MapboxMap() {
  const land = mbLand.map(d => trace(d, 8, true)).join("");
  return (
    <MapSvg width="719" height="398" viewBox="18 18 2157 1194" fontFamily='Roboto, "Liberation Sans", sans-serif'>
      <defs>
        <clipPath id="land"><path d={land} /></clipPath>
        <filter id="soft" x="-20%" y="-20%" width="140%" height="140%"><feGaussianBlur stdDeviation="16" /></filter>
      </defs>
      <rect x="0" y="0" width="2200" height="1230" fill="#72ceff" />
      <g filter="url(#soft)">
        <path d="M270 0H900V500H680L600 400 500 250 380 190 280 100Z" fill="#8ed9ff" />
        <path d="M0 0H290L270 100 120 110 0 70Z" fill="#82d5ff" />
        <path d="M30 130 230 150 400 240 520 300 600 420 660 520 420 480 300 420 180 480 100 520 0 420Z" fill="#66c9ff" />
        <path d="M0 560 130 600 110 900 0 1000Z" fill="#66c9ff" />
        <path d="M160 500 280 440 280 700 220 800 170 760Z" fill="#80d4ff" />
        <path d="M1400 380 1500 480 1800 640 1840 780 1680 700 1500 560Z" fill="#90daff" />
        <path d="M1380 960 1700 1080 1640 1212H1380Z" fill="#88d7ff" />
        <path d="M1900 640 2200 600V980L2060 1000 1960 900Z" fill="#90daff" />
        <path d="M1660 1000 2050 960 2100 1212H1700Z" fill="#68caff" />
      </g>
      <path d={land} fill="none" stroke="#90daff" strokeWidth="44" strokeLinejoin="round" opacity=".7" filter="url(#soft)" />
      <path d={land} fill="#d8edcb" />
      <g clipPath="url(#land)">
        <g fill="#c9e8bd">{mbGreen.map((d, i) => <path key={i} d={trace(d, 22, true)} />)}</g>
        <g fill="#e0eedb">{mbPaleLand.map((d, i) => <path key={i} d={trace(d, 20, true)} />)}</g>
        <g fill="none" stroke="#fdeedb" strokeWidth="7" opacity=".5">{mbRoads.map((d, i) => <path key={i} d={trace(d, 7)} />)}</g>
        <g fill="none" stroke="#f8c748" strokeWidth="3.6">{mbYellow.map((d, i) => <path key={i} d={trace(d, 8)} />)}</g>
        <g fill="none" stroke="#fba763" strokeWidth="4.400">{mbRoads.map((d, i) => <path key={i} d={trace(d, 7)} />)}</g>
        <g fill="none" stroke="#9ca0d0" strokeWidth="3.400">{mbBorders.map((d, i) => <path key={i} d={trace(d, 9)} />)}</g>
      </g>
      <g stroke="#f4faf0" strokeWidth="5" strokeLinejoin="round" paintOrder="stroke" textAnchor="middle">
        {mbLabels.map(([x, y, t, w, s, b]) => (
          <text key={t} x={x} y={y - 2} fontSize={s} fontWeight={b} textLength={w} lengthAdjust="spacingAndGlyphs"
            fill={b === 400 ? "#4c4c55" : "#26262c"}>{t}</text>
        ))}
        <text x="2071" y="184" fontSize="34" fontWeight="600" textAnchor="start" fill="#26262c">Moldova</text>
        <text x="2110" y="26" fontSize="34" fontWeight="600" textAnchor="start" fill="#26262c">Ukraine</text>
      </g>
      {mbCapitals.map(c => {
        const [x, y] = c.split(" ");
        return <g key={c}><circle cx={x} cy={y} r="9" fill="#fff" stroke="#111" strokeWidth="3" /><circle cx={x} cy={y} r="4.5" fill="#111" /></g>;
      })}
      {mbCities.map(c => {
        const [x, y] = c.split(" ");
        return <circle key={c} cx={x} cy={y} r="7" fill="#111" stroke="#fff" strokeWidth="1.5" />;
      })}
    </MapSvg>
  );
}

/* ---------- composed parts ---------- */
function PanelTools({ tight }: { tight?: boolean }) {
  return <TabTools $tight={tight}><FaEdit size={13} /><WindowGlyph /><FaTimes size={11} /></TabTools>;
}

function Gantt() {
  const bars = [[0, 8], [27, 12], [58, 12], [89, 12], [120, 74], [213, 4]];
  return (
    <svg width="217" height="542" viewBox="0 0 217 542">
      {bars.map(([x, w]) => <rect key={x} x={x} y="1" width={w} height="541" fill="#fdbac7" />)}
      {[30, 61, 92, 123, 154, 185].map(x => <rect key={x} x={x} y="0" width="1" height="542" fill="rgba(120,60,80,.22)" />)}
      {[...Array(10)].map((_, i) => <rect key={i} x="0" y={50 + i * 50} width="217" height="1" fill="#cfcfcf" />)}
      <path d="M85.500 0V502" stroke="#999" strokeDasharray="1 1" />
      <rect x="0" y="502" width="88" height="40" fill="#a6a6a6" />
      {[...Array(13)].map((_, i) => <rect key={i} x={3 + i * 6.6} y="502" width="1" height="40" fill="#8c8c8c" />)}
      <path d="M0 502.500H88" stroke="#777" /><path d="M53.500 502V542" stroke="#82778c" strokeWidth="2" /><path d="M87 502V542" stroke="#666" strokeWidth="2" />
    </svg>
  );
}

const resources = ["Arnoud Wolth...", "Assia Lamme...", "ELSEMIEK GU...", "Hessel Wand...", "R2", "R3", "R4", "R5", "R6", "R7", "R8"];
const taskColumns = ["Job Number", "Task No.", "Task Descrip...", "Task Importa..."];
const taskValues = ["JOB002", "TASK002001", "Filter values", "Medium"];
const dayNames = ["Tu", "We", "Th", "Fr", "Sa", "Su", "Mo"];
const calendar: [string, string][][] = [
  [["W", "h"], ["SU", "h"], ["MO", "h"], ["TU", "h"], ["WE", "h"], ["TH", "h"], ["FR", "h"], ["SA", "h"]],
  [["14", "w"], ["31", "o"], ["1", "n"], ["2", "n"], ["3", "n"], ["4", "n"], ["5", "n"], ["6", "n"]],
  [["15", "w"], ["7", "n"], ["8", "n"], ["9", "n"], ["10", "n"], ["11", "n"], ["12", "n"], ["13", "n"]],
  [["16", "w"], ["14", "n"], ["15", "n"], ["16", "n"], ["17", "n"], ["18", "n"], ["19", "n"], ["20", "n"]],
  [["17", "w"], ["21", "n"], ["22", "n"], ["23", "s"], ["24", "r"], ["25", "t"], ["26", "r"], ["27", "r"]],
  [["18", "w"], ["28", "r"], ["29", "s"], ["30", "n"], ["1", "o"], ["2", "o"], ["3", "o"], ["4", "o"]],
];

function Clipboard() {
  return (
    <svg width="13" height="16" viewBox="0 0 13 16">
      <rect x=".6" y="1.600" width="11.800" height="13.800" rx="1" fill="#f6f6f8" stroke="#dc8745" strokeWidth="1.300" />
      <rect x="3.500" y="0" width="6" height="3.200" rx="1" fill="#9a9aa2" />
      <path d="M3.500 6h6M3.500 8.500h6M3.500 11h4" stroke="#a5a8b5" /><path d="M9 15.500l3.500-4v4z" fill="#dc8745" />
    </svg>
  );
}

function OpenTasks() {
  return (
    <PanelBox $w={554} $h={570}>
      <TabRow><Tab $w={99} $active>Open Tasks <FaTimes size={11} /></Tab><PanelTools /></TabRow>
      <PanelBody>
        <Toolbar>
          <SearchInput $w={170}>Search...</SearchInput>
          <BlueButton $w={32}><FaSearch size={16} /></BlueButton>
          <IconRow $gap={9} $pad={8}>
            <FaHandPointUp size={16} /><FaSearch size={16} /><FaPowerOff size={16} /><FaSave size={16} />
            <FaPlus size={16} /><FaCog size={16} /><FaFileExcel size={16} />
          </IconRow>
        </Toolbar>
        <HeaderRow $h={34}>
          <HeaderCell $w={32} $pad={4}><Check /></HeaderCell>
          <HeaderCell $w={30} />
          {taskColumns.map(c => <HeaderCell key={c} $w={100}>{c}</HeaderCell>)}
          <HeaderCell $w={90} $strong $last>Source App</HeaderCell>
        </HeaderRow>
        <Row $h={23}>
          <Cell $w={33} $pad={9} $drop={4}><Check /></Cell>
          <Cell $w={30} $pad={4} $drop={4}><FaFilter size={19} color="#dcdadb" /></Cell>
          {taskValues.map(c => <Cell key={c} $w={100} $drop={2}>{c}</Cell>)}
          <Cell $w={89} $drop={2} $last>CRONUSBE</Cell>
        </Row>
        <Spacer />
        <ScrollRow $pr={5}><Arrow $dir="l" /><Thumb $w={271} $h={6} /><Arrow $dir="r" /></ScrollRow>
        <PagerBar>
          <PagerCell $w={32} $tone="#bbb"><ChevronsLeft size={18} strokeWidth={1.6} /></PagerCell>
          <PagerCell $w={48} $tone="#bbb"><ChevronLeft size={18} strokeWidth={1.6} /></PagerCell><PagerSep />
          <PagerCell $w={54}>Page</PagerCell><PagerInput $w={50}>1</PagerInput>
          <PagerCell $w={39} $pl={6} $start>of 1</PagerCell><PagerSep />
          <PagerCell $w={48} $tone="#bbb"><ChevronRight size={18} strokeWidth={1.6} /></PagerCell>
          <PagerCell $w={40} $pr={8} $tone="#bbb"><ChevronsRight size={18} strokeWidth={1.6} /></PagerCell><PagerSep />
          <PagerCell $w={48} $tone="#888"><FaSyncAlt size={15} /></PagerCell><PagerSep />
          <PagerInput $w={80} $ml={8}>50 <Spin /></PagerInput>
          <PagerInfo>1 - 1 of 1</PagerInfo>
        </PagerBar>
      </PanelBody>
    </PanelBox>
  );
}

function MapPanel() {
  return (
    <PanelBox $w={554} $h={327}>
      <TabRow>
        <Tab $w={61} $active>Map <FaTimes size={11} /></Tab>
        <Tab $w={90}>Indicators <FaTimes size={11} /></Tab>
        <Tab $w={123}>Resource Filters <FaTimes size={11} /></Tab>
        <PanelTools />
      </TabRow>
      <PanelBody>
        <MapFrame>
          <OsmMap />
          <MapButtons>
            <MapButton><FaMapMarkerAlt size={12} /></MapButton>
            <MapButton><FaRoute size={12} /></MapButton>
            <MapButton><FaAnchor size={12} /></MapButton>
          </MapButtons>
          <LayersButton>
            <svg width="27" height="26" viewBox="0 0 27 26">
              <path d="M.5 16.500 13.500 25.500 26.500 16.500 24 15 13.500 22 3 15Z" fill="#8e8e8e" />
              <path d="M.5 13 13.500 22 26.500 13 24 11.500 13.500 18.500 3 11.500Z" fill="#a5a5a5" />
              <path d="M.5 9.500 13.500 18.500 26.500 9.500 13.500.5Z" fill="#dcdcdc" />
            </svg>
          </LayersButton>
          <ZoomControl>
            <ZoomHalf><FaPlus size={12} color="#777" /></ZoomHalf>
            <ZoomHalf><svg width="12" height="3"><rect width="12" height="3" rx="1" fill="#777" /></svg></ZoomHalf>
          </ZoomControl>
          <ScaleBar>500 km</ScaleBar>
          <Attribution><Flag /><Muted>Leaflet |</Muted> © <Muted>OpenStreetMap</Muted> contributors</Attribution>
        </MapFrame>
      </PanelBody>
    </PanelBox>
  );
}

function PlanningBoard() {
  return (
    <PanelBox $w={503} $h={704}>
      <TabRow><Tab $w={118} $active>Planning Board <FaTimes size={11} /></Tab><PanelTools /></TabRow>
      <PanelBody>
        <Toolbar>
          <SearchInput $w={170}>Search...</SearchInput>
          <BlueButton $w={32}><FaSearch size={16} /></BlueButton>
          <BlueButton $w={32} $ml={8}><FaCompress size={16} /></BlueButton>
          <BlueButton $w={58} $ml={8}><FaPlay size={16} /><FaCaretDown size={16} /></BlueButton>
          <BlueButton $w={58} $ml={8} $gap={9}><FaArrowsAltH size={16} /><FaCaretDown size={16} /></BlueButton>
          <BlueButton $w={58} $ml={8} $gap={9}><FaDesktop size={18} /><FaCaretDown size={16} /></BlueButton>
          <BlueButton $w={5} $ml={8} />
          <BlueButton $w={32} $ml={8}><FaAlignJustify size={15} /></BlueButton>
        </Toolbar>
        <Board>
          <ResourceSide>
            <HeaderRow $h={70}>
              <HeaderCell $w={25} /><HeaderCell $w={100}>Display Name</HeaderCell>
              <HeaderCell $w={133} $last>Resource Type</HeaderCell>
            </HeaderRow>
            {resources.map((r, i) => (
              <Row key={r} $h={i ? 50 : 51}>
                <Cell $w={26} $pad={5} $top={i ? 4 : 5} $tone="#e2e2e2"><Dash /></Cell>
                <Cell $w={100} $top={i ? 4 : 5} $tone="#e2e2e2">{r}</Cell>
                <Cell $w={132} $top={i ? 4 : 5} $last>Resource</Cell>
              </Row>
            ))}
          </ResourceSide>
          <Splitter />
          <TimeSide>
            <TimeHead>
              <TimeLine $h={23}><TimeCell $w={156} $pad={7}>Week 17 - Apr</TimeCell><TimeCell $w={61} $pad={7}>Week 18 -</TimeCell></TimeLine>
              <TimeLine $h={23}>{dayNames.map((d, i) => <TimeCell key={d} $w={i === 0 ? 32 : i === 6 ? 30 : 31} $pad={7}>{d}</TimeCell>)}</TimeLine>
              <TimeLine $h={22} $last>{dayNames.map((d, i) => <TimeCell key={d} $small $w={i === 0 ? 32 : i === 6 ? 30 : 31} $pad={1}>{23 + i}</TimeCell>)}</TimeLine>
              <NowPin width="13" height="15" viewBox="0 0 13 15"><path d="M6.500 13.500C5.500 11 1.700 9 1.700 5.800a4.800 4.800 0 1 1 9.600 0C11.300 9 7.500 11 6.500 13.500z" fill="#fff" stroke="#e07b2a" strokeWidth="2" /></NowPin>
            </TimeHead>
            <TimeBody>
              <Gantt />
              <VScroll $w={14}><Arrow $dir="u" $s={3.5} /><Thumb $w={6} $h={329} /><Arrow $dir="d" $s={3.5} /></VScroll>
            </TimeBody>
          </TimeSide>
        </Board>
        <PagerBar>
          <PagerCell $w={32} $tone="#c9dfe9"><ChevronLeft size={18} strokeWidth={2.4} /></PagerCell>
          <PagerCell $w={17} $tone="#bbb"><ChevronsLeft size={18} strokeWidth={1.6} /></PagerCell>
          <PagerCell $w={55} $pl={6} $tone="#bbb"><ChevronLeft size={18} strokeWidth={1.6} /></PagerCell><PagerSep />
          <PagerCell $w={54}>Page</PagerCell><PagerInput $w={50}>1</PagerInput>
          <PagerCell $w={39} $pl={6} $start>of 1</PagerCell><PagerSep />
          <PagerCell $w={48} $tone="#bbb"><ChevronRight size={18} strokeWidth={1.6} /></PagerCell>
          <PagerCell $w={40} $pr={8} $tone="#bbb"><ChevronsRight size={18} strokeWidth={1.6} /></PagerCell><PagerSep />
          <PagerCell $w={48} $tone="#888"><FaSyncAlt size={15} /></PagerCell><PagerSep />
          <PagerInput $w={58} $ml={8} $open>50 <Spin /></PagerInput>
          <PagerCell $w={48} $pr={1} $tone="#8fb2e6"><ChevronRight size={19} strokeWidth={2.6} /></PagerCell>
        </PagerBar>
      </PanelBody>
    </PanelBox>
  );
}

const TableArea = styled.div<{ $h?: number }>`
  display: flex; overflow: hidden; ${p => (p.$h ? `height: ${p.$h}px; flex: none;` : "flex: 1; min-height: 0;")}
`;
const TableRows = styled.div`flex: 1; display: flex; flex-direction: column; overflow: hidden;`;
const GroupRow = styled.div<{ $h: number }>`
  height: ${p => p.$h}px; border-bottom: 1px solid ${line}; display: flex; align-items: center; gap: 11px;
  padding-left: 10px; color: #777; flex: none;
`;

function PlannedTasks() {
  return (
    <PanelBox $w={176} $h={193}>
      <TabRow><Tab $w={115} $active>Planned Tasks <FaTimes size={11} /></Tab><PanelTools /></TabRow>
      <PanelBody>
        <Toolbar><SearchInput $w={126}>Search...</SearchInput><BlueButton $w={32} $ml={8}><FaAlignJustify size={15} /></BlueButton></Toolbar>
        <HeaderRow $h={34}>
          <HeaderCell $w={32} $pad={4}><Check /></HeaderCell><HeaderCell $w={30} />
          <HeaderCell $w={100}>Job Number</HeaderCell><HeaderCell $w={12} $last>T</HeaderCell>
        </HeaderRow>
        <TableArea $h={56}>
          <TableRows>
            {["JOB_7878", "JOB_4819", "JOB_953"].map(j => (
              <Row key={j} $h={22}>
                <Cell $w={33} $pad={9} $drop={5}><Check /></Cell>
                <Cell $w={30} $pad={5} $drop={5}><FaFilter size={18} color="#dcdadb" /></Cell>
                <Cell $w={101} $drop={3}>{j}</Cell>
              </Row>
            ))}
          </TableRows>
          <VScroll $w={10}><Arrow $dir="u" $s={3.5} /><Thumb $w={6} $h={11} /><Arrow $dir="d" $s={3.5} /></VScroll>
        </TableArea>
        <ScrollRow $pr={15}><Arrow $dir="l" /><Thumb $w={12} $h={6} /><Arrow $dir="r" /></ScrollRow>
        <PagerBar>
          <PagerCell $w={32} $tone="#c9dfe9"><ChevronLeft size={18} strokeWidth={2.4} /></PagerCell>
          <PagerCell $w={17} $tone="#bbb"><ChevronsLeft size={18} strokeWidth={1.6} /></PagerCell>
          <PagerCell $w={55} $pl={6} $tone="#bbb"><ChevronLeft size={18} strokeWidth={1.6} /></PagerCell><PagerSep />
          <PagerCell $w={21} $pl={12} $start>Page</PagerCell>
          <PagerCell $w={48} $pr={2} $tone="#8fb2e6"><ChevronRight size={19} strokeWidth={2.6} /></PagerCell>
        </PagerBar>
      </PanelBody>
    </PanelBox>
  );
}

const DetailsTools = styled.div`
  height: 22px; flex: none; border-bottom: 1px solid ${line}; display: flex; align-items: center; gap: 9px;
  padding-left: 8px; color: ${grey};
`;

function Details() {
  return (
    <PanelBox $w={175} $h={193}>
      <TabRow><Tab $w={74} $active>Details <FaTimes size={11} /></Tab><PanelTools /></TabRow>
      <PanelBody>
        <DetailsTools>
          <FaSearch size={16} /><FaPowerOff size={16} /><FaSave size={16} /><FaPlus size={16} /><FaCog size={16} />
          <BlueButton $w={32} $h={21}><FaAlignJustify size={15} /></BlueButton>
        </DetailsTools>
        <HeaderRow $h={23}>
          <HeaderCell $w={61}>Prope...</HeaderCell><HeaderCell $w={102}>Value</HeaderCell>
        </HeaderRow>
        <TableArea>
          <TableRows>
            <GroupRow $h={31}><FaMinusSquare size={14} color="#888" />Basic info</GroupRow>
            <Row $h={22}><Cell $w={62} $drop={2}>Job Nu...</Cell></Row>
            <Row $h={22}><Cell $w={62} $drop={2}>Task No.</Cell></Row>
            <GroupRow $h={30}><FaMinusSquare size={14} color="#888" />Integration</GroupRow>
            <Row $h={22}><Cell $w={62} $drop={2}>Source ...</Cell></Row>
          </TableRows>
          <VScroll $w={10}><Arrow $dir="u" $s={3.5} /><Thumb $w={6} $h={35} /><Arrow $dir="d" $s={3.5} /></VScroll>
        </TableArea>
      </PanelBody>
    </PanelBox>
  );
}

function CalendarPanel() {
  return (
    <PanelBox $w={142} $h={193}>
      <TabRow><Tab $w={85} $active>Calendar <FaTimes size={11} /></Tab><PanelTools tight /></TabRow>
      <PanelBody>
        <CalTitle><ArrowLeft size={13} strokeWidth={2.6} />APRIL 2024<ArrowRight size={13} strokeWidth={2.6} /></CalTitle>
        <CalGrid>{calendar.flatMap((w, r) => w.map(([t, k], c) => <Day key={r + "-" + c} $k={k}>{t}</Day>))}</CalGrid>
      </PanelBody>
    </PanelBox>
  );
}

export default function App() {
  const side = [FaHome, FaUserCog, FaWrench, FaSlidersH, FaCalendarAlt, FaPlug, FaInfoCircle, FaClipboardList];
  return (
    <>
      <GlobalStyle />
      <Screen>
        <Windows>
          <SchedulerWindow>
            <TopBar>
              <MenuButton><MenuLines /></MenuButton>
              <TestBadge>Test</TestBadge>
              <Signal>{[6, 9, 13, 17, 20].map(h => <SignalBar key={h} $h={h} />)}</Signal>
              <NavItem $gap={0}><FaBell size={19} /></NavItem>
              <NavItem $gap={30}><FaIdCard size={21} /><NavText>Profile</NavText><FaCaretDown size={11} /></NavItem>
              <NavItem $gap={40}><FaCog size={18} /><NavText>Settings</NavText></NavItem>
              <NavItem $gap={36}><FaPaintBrush size={19} /></NavItem>
              <NavItem $gap={30}><FaUser size={20} /><NavText>Hendrik Bulens</NavText></NavItem>
            </TopBar>
            <Body>
              <Sidebar>{side.map((Icon, i) => <SideItem key={i}><Icon size={16} /></SideItem>)}</Sidebar>
              <Content>
                <Column $w={554}><OpenTasks /><MapPanel /></Column>
                <Column $w={503}>
                  <PlanningBoard />
                  <BottomPanels><PlannedTasks /><Details /><CalendarPanel /></BottomPanels>
                </Column>
              </Content>
            </Body>
          </SchedulerWindow>
          <Divider />
          <FormWindow>
            <LogoRow>
              <svg width="290" height="54" viewBox="0 0 290 54">
                <path d="M0 3 40 24V38L7 21 0 16Z" fill="#8c9bf7" />
                <path d="M7 21 40 38 28 46 7 34Z" fill="#7568e8" />
                <path d="M13 37 28 46 13 51Z" fill="#6450d8" />
                <text x="51.500" y="41.500" fontFamily="Lato, Inter, sans-serif" fontWeight="700" fontSize="30" fill="#160063" textLength="228" lengthAdjust="spacingAndGlyphs">Dime.Scheduler</text>
              </svg>
            </LogoRow>
            <SampleTitle>Sample locations:</SampleTitle>
            <Places>{["Málaga", "Sevilla", "Barcelona", "Valencia"].map(p => <Place key={p}><Clipboard />{p}</Place>)}</Places>
            <MapboxFrame>
              <MapboxMap />
              <Cursor width="14" height="21" viewBox="0 0 14 21"><path d="M1 1V16.500L4.600 13.200 7.200 19.300 9.600 18.200 7 12.300H11.800Z" fill="#fff" stroke="#222" /></Cursor>
            </MapboxFrame>
            <Credits>© Mapbox © OpenStreetMap Improve this map</Credits>
            <Form>
              <Label>Resource No.</Label>
              <Input>ARNOUD</Input>
              <Pair>
                <Field><Label>Longitude</Label><Input>-3.655593055137558</Input></Field>
                <Field><Label>Latitude</Label><Input>40.30435415863178</Input></Field>
              </Pair>
              <SetButton>Set</SetButton>
            </Form>
          </FormWindow>
        </Windows>
      </Screen>
    </>
  );
}
